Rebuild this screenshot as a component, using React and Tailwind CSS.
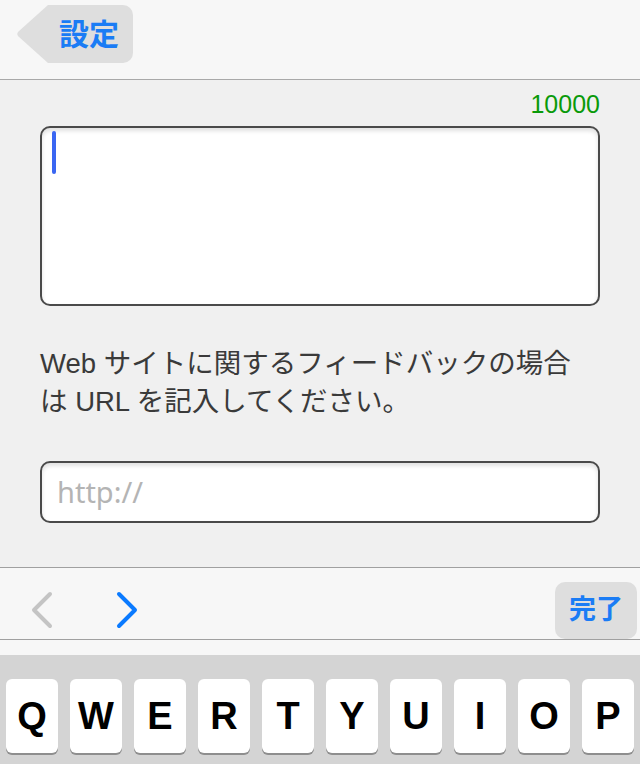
import React from 'react';

const keys = ['Q', 'W', 'E', 'R', 'T', 'Y', 'U', 'I', 'O', 'P'];

const BackButton = () => (
    <button className="flex h-[58px]">
        <svg width="32" height="58" viewBox="0 0 32 58" className="block">
            <path d="M2.5 31.5 Q0 29 2.5 26.5 L32 0 V58 Z" fill="#dedede" />
        </svg>
        <div className="flex h-full w-[85px] items-center rounded-r-[10px] bg-[#dedede] pl-[11px] text-[30px] font-bold text-[#1a7cf5]">
            設定
        </div>
    </button>
);

const Chevron = ({ dir, color }) => (
    <svg width="28" height="40" viewBox="0 0 28 40" className="block">
        <path
            d={dir === 'left' ? 'M22 4 L6 20 L22 36' : 'M6 4 L22 20 L6 36'}
            fill="none"
            stroke={color}
            strokeWidth="4"
            strokeLinecap="round"
            strokeLinejoin="round"
        />
    </svg>
);

export default function App() {
    return (
        <div className="flex h-[764px] w-[640px] flex-col overflow-hidden bg-[#f0f0f0] font-['Liberation_Sans','Noto_Sans_CJK_JP',sans-serif]">
            {/* nav bar */}
            <header className="flex h-[80px] shrink-0 items-start border-b border-[#a9a9a9] bg-[#f7f7f7] pl-[16px] pt-[5px]">
                <BackButton />
            </header>

            {/* form */}
            <main className="flex-1 px-[40px] pt-[9px]">
                <div className="text-right text-[25px] leading-[30px] text-[#0a9a0a]">10000</div>
                <div className="mt-[7px] h-[180px] rounded-[10px] border-2 border-[#4a4a4a] bg-white pl-[10px] pt-[3px] shadow-[inset_0_3px_4px_rgba(0,0,0,0.12)]">
                    <div className="h-[43px] w-[4px] rounded-full bg-[#3a66f2]" />
                </div>
                <p className="mt-[39px] whitespace-nowrap text-[27.5px] leading-[38px] text-[#3a3a3a]">
                    Web サイトに関するフィードバックの場合
                    <br />
                    は URL を記入してください。
                </p>
                <div className="mt-[40px] flex h-[62px] items-center rounded-[10px] border-2 border-[#4a4a4a] bg-white pl-[15px] shadow-[inset_0_3px_4px_rgba(0,0,0,0.12)]">
                    <span className="font-['Noto_Sans',sans-serif] text-[29px] text-[#b4b4b4]">http://</span>
                </div>
            </main>

            {/* input accessory bar */}
            <div className="flex h-[73px] shrink-0 border-y border-[#a0a0a0] bg-[#f7f7f7]">
                <div className="ml-[28px] pt-[22px]">
                    <Chevron dir="left" color="#c4c4c4" />
                </div>
                <div className="ml-[57px] pt-[22px]">
                    <Chevron dir="right" color="#0a7aff" />
                </div>
                <button className="ml-auto mr-[3px] flex h-[57px] w-[82px] items-center justify-center self-end rounded-[10px] bg-[#dedede] text-[27px] font-bold text-[#1a7cf5]">
                    完了
                </button>
            </div>
            <div className="h-[15px] shrink-0 bg-[#f7f7f7]" />

            {/* keyboard */}
            <div className="flex h-[109px] shrink-0 gap-[12px] bg-[#d4d4d4] px-[6px] pt-[24px]">
                {keys.map((k) => (
                    <div
                        key={k}
                        className="flex h-[74px] w-[52px] items-center justify-center rounded-[6px] bg-white text-[38px] font-bold text-black shadow-[0_2px_0_#8e8e8e]"
                    >
                        {k}
                    </div>
                ))}
            </div>
        </div>
    );
}
